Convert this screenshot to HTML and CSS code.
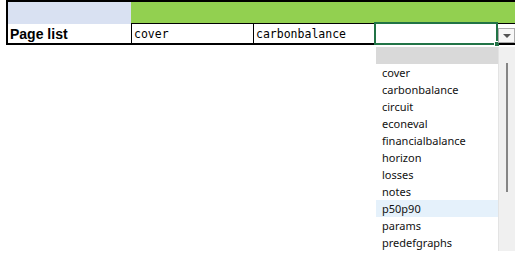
FILE: index.html
```html
<!DOCTYPE html>
<html lang="en">
<head>
    <meta charset="UTF-8">
    <meta name="viewport" content="width=device-width, initial-scale=1.0">
    <title>Page list</title>
    <link rel="stylesheet" href="styles.css">
</head>
<body>
    <div class="sheet">
        <div class="row head">
            <div class="cell c1 blue"></div>
            <div class="cell green"></div>
        </div>
        <div class="row data">
            <div class="cell c1 label">Page list</div>
            <div class="cell c2 mono">cover</div>
            <div class="cell c3 mono">carbonbalance</div>
            <div class="cell c4"></div>
        </div>
    </div>

    <div class="selected"><span class="handle"></span></div>
    <div class="drop-btn"><span class="arrow"></span></div>

    <div class="dropdown">
        <div class="list">
            <div class="list-top"></div>
            <div class="item">cover</div>
            <div class="item">carbonbalance</div>
            <div class="item">circuit</div>
            <div class="item">econeval</div>
            <div class="item">financialbalance</div>
            <div class="item">horizon</div>
            <div class="item">losses</div>
            <div class="item">notes</div>
            <div class="item hover">p50p90</div>
            <div class="item">params</div>
            <div class="item">predefgraphs</div>
        </div>
        <div class="scroll">
            <div class="thumb"></div>
        </div>
    </div>
</body>
</html>
```

FILE: styles.css
```css
body {
    margin: 0;
    background-color: white;
    font-family: 'Noto Sans', sans-serif;
    position: relative;
    width: 515px;
    height: 264px;
    overflow: hidden;
}
.sheet {
    margin-left: 6px;
    border-top: 2px solid #000;
    border-left: 2px solid #000;
}
.row {
    display: flex;
}
.head {
    height: 22px;
}
.data {
    height: 19px;
    border-bottom: 2px solid #000;
}
.cell {
    box-sizing: border-box;
}
.c1 {
    width: 123px;
}
.blue {
    background-color: #d9e1f2;
}
.green {
    flex: 1;
    background-color: #92d050;
    border-bottom: 1px solid #000;
}
.data .cell {
    border-left: 1px solid #000;
    padding: 1px 0 0 2px;
    line-height: 18px;
    color: #000;
}
.data .c1 {
    border-left: none;
}
.label {
    font-family: 'Liberation Sans', sans-serif;
    font-weight: bold;
    font-size: 14px;
}
.mono {
    font-family: 'DejaVu Sans Mono', monospace;
    font-size: 11.5px;
}
.c2, .c3 {
    width: 122px;
}
.c3 {
    width: 121px;
}
.c4 {
    flex: 1;
}
.selected {
    position: absolute;
    left: 374px;
    top: 22px;
    width: 124px;
    height: 23px;
    box-sizing: border-box;
    border: 2px solid #217346;
    background-color: white;
}
.handle {
    position: absolute;
    right: -3px;
    bottom: -3px;
    width: 4px;
    height: 4px;
    background-color: #217346;
    border: 1px solid white;
    border-width: 1px 0 0 1px;
}
.drop-btn {
    position: absolute;
    left: 498px;
    top: 28px;
    width: 17px;
    height: 15px;
    box-sizing: border-box;
    border: 1px solid #ababab;
    background-color: #f7f7f7;
    display: flex;
    justify-content: center;
    align-items: center;
}
.arrow {
    width: 0;
    height: 0;
    border-left: 4px solid transparent;
    border-right: 4px solid transparent;
    border-top: 4px solid #555;
    margin-top: 1px;
}
.dropdown {
    position: absolute;
    left: 376px;
    top: 47px;
    width: 139px;
    height: 204px;
    display: flex;
}
.list {
    width: 122px;
    background-color: white;
}
.list-top {
    height: 17px;
    background-color: #d9d9d9;
}
.item {
    height: 17px;
    line-height: 17px;
    padding-left: 6px;
    font-size: 11px;
    color: #111;
}
.item.hover {
    background-color: #e5f1fb;
}
.scroll {
    flex: 1;
    background-color: #f0f0f0;
    border-left: 1px solid #e3e3e3;
    position: relative;
}
.thumb {
    position: absolute;
    left: 7px;
    top: 16px;
    width: 2px;
    height: 129px;
    background-color: #858585;
}
```
